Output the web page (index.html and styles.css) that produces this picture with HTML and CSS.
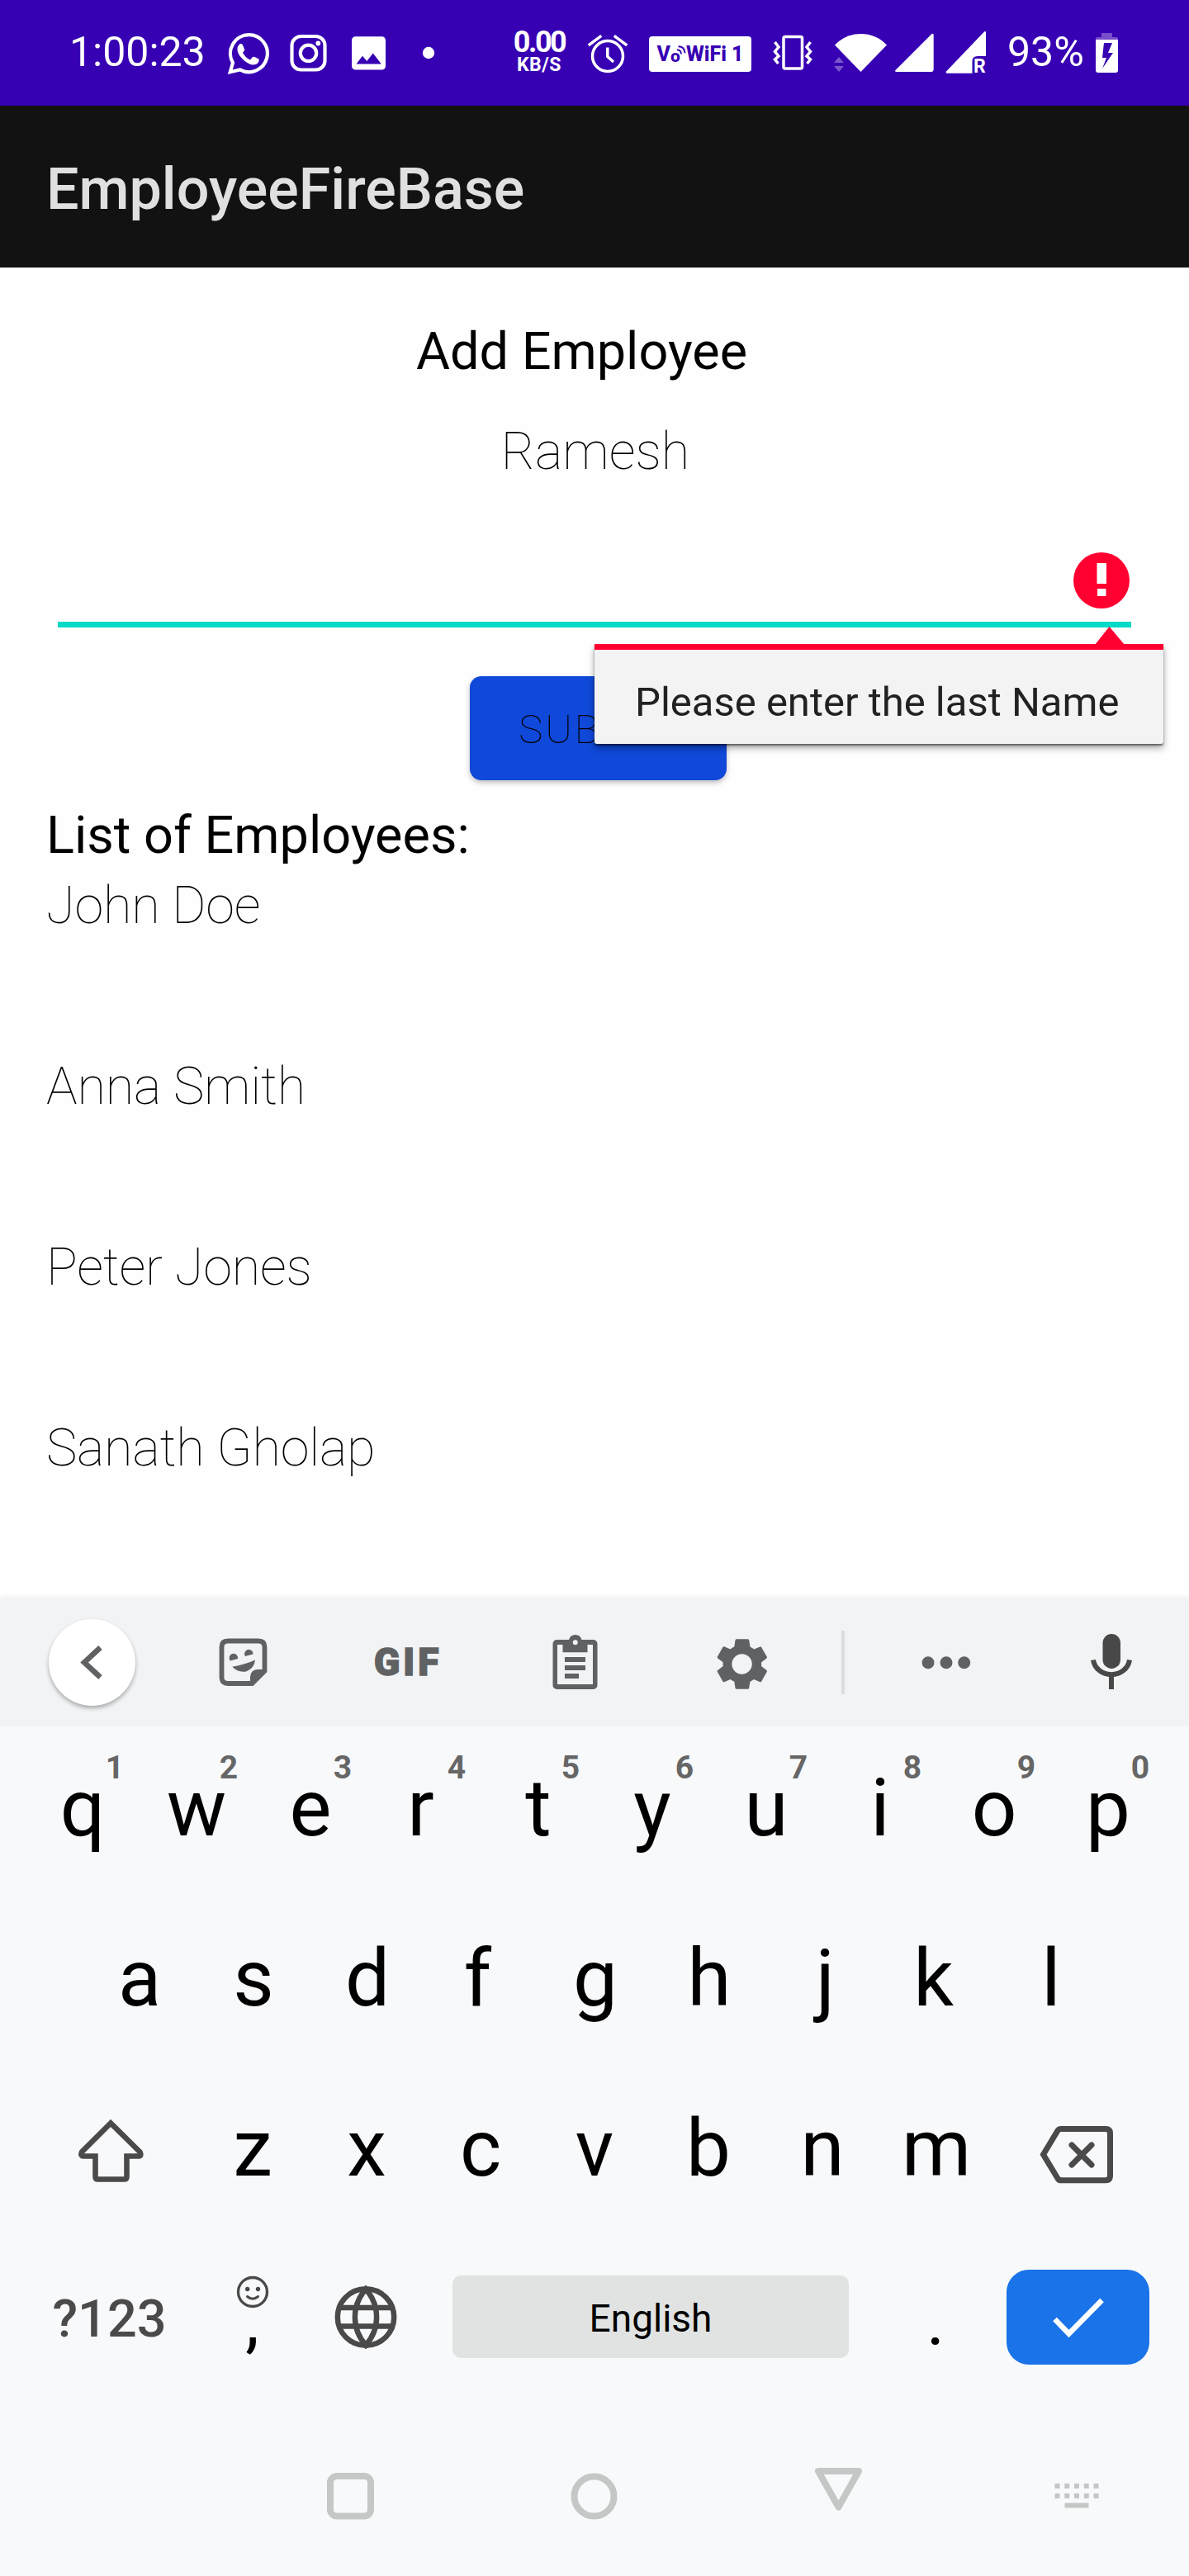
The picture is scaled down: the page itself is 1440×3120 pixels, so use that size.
FILE: index.html
```html
<!DOCTYPE html>
<html lang="en">
<head>
<meta charset="utf-8">
<title>EmployeeFireBase</title>
<link rel="stylesheet" href="styles.css">
</head>
<body>
<div class="status">
  <span class="clock">1:00:23</span>
  <svg class="whatsapp" width="52" height="128" viewBox="275 0 52 128"><path d="M301 42.200A22.500 22.500 0 1 1 290.500 84.400L278.800 87.200L282 76A22.500 22.500 0 0 1 301 42.200Z" fill="none" stroke="#fff" stroke-width="4.200"/><path d="M289 54.500c1.500-2 4-2.200 5 0l2 5c.5 1.500-.2 2.500-2 4.300c2 4 5 7 9 8.700l2.500-3c.8-1 2-1 3-.5l4.500 2.300c1.500 1 .5 4.200-1.500 5.800c-4 3-10 1-15-3c-6-5-12-13-7.500-19.600Z" fill="#fff"/></svg>
  <svg class="insta" width="48" height="128" viewBox="350 0 48 128"><rect x="353.500" y="44" width="40" height="40.500" rx="11" fill="none" stroke="#fff" stroke-width="4.200"/><circle cx="373.500" cy="64.300" r="9.700" fill="none" stroke="#fff" stroke-width="4.200"/><circle cx="385.300" cy="52.500" r="2.900" fill="#fff"/></svg>
  <svg class="photo" width="42" height="128" viewBox="426 0 42 128"><path fill="#fff" fill-rule="evenodd" d="M430.500 44.200h32a4.500 4.500 0 0 1 4.500 4.500v31.300a4.500 4.500 0 0 1-4.500 4.500h-32a4.500 4.500 0 0 1-4.500-4.500v-31.300a4.500 4.500 0 0 1 4.500-4.500ZM431.500 77.500h30.300L451.800 64.500L444.300 74L439 67.800Z"/></svg>
  <svg class="dot" width="16" height="128" viewBox="511 0 16 128"><circle cx="519" cy="64" r="7.200" fill="#fff"/></svg>
  <span class="speed"><b class="rate">0.00</b><b class="unit">KB/S</b></span>
  <svg class="alarm" width="50" height="128" viewBox="711 0 50 128"><g fill="none" stroke="#fff" stroke-width="3.500"><circle cx="736" cy="68" r="18.500"/><path d="M735.800 57.500v11l7.200 6.500M712.800 54.800l15.500-11.500M743.800 43.300l15.500 11.500"/></g></svg>
  <span class="vowifi"><span>V</span><span class="vo">o<svg class="waves" width="12" height="12" viewBox="0 0 12 12"><path d="M1 5.500q4.500-.5 5 5M2.500 1.200q7.500 0 8 8" fill="none" stroke="#3700b3" stroke-width="2"/></svg></span><span>WiFi 1</span></span>
  <svg class="vibrate" width="48" height="128" viewBox="936 0 48 128"><g fill="none" stroke="#fff" stroke-width="3.500"><rect x="949" y="44.500" width="22.500" height="38.500" rx="2"/><path d="M938.500 51l4.500 6l-4.500 5.500l4.500 5.500l-4.500 4l4 5M981.500 51l-4.500 6l4.500 5.500l-4.500 5.500l4.500 4l-4 5"/></g></svg>
  <svg class="wifi" width="66" height="128" viewBox="1009 0 66 128"><path d="M1011 54.500Q1024 41 1042.500 41T1074 54.500L1042.500 87Z" fill="#fff"/><path d="M1010 76l6-7l6 7ZM1010 80h12l-6 7Z" fill="#7a55cb"/></svg>
  <svg class="signal" width="48" height="128" viewBox="1084 0 48 128"><path d="M1084.500 85L1128 41.500Q1130.500 40 1130.700 42V84Q1130.500 87 1128 87H1085Q1083.500 86.500 1084.500 85Z" fill="#fff"/></svg>
  <span class="roaming"><svg width="50" height="128" viewBox="1145 0 50 128"><path d="M1146 86.500L1191 39.500Q1194 37 1194 39V68H1184Q1177.500 68 1177.500 74V88.800H1147Q1145 88.500 1146 86.500Z" fill="#fff"/></svg><b>R</b></span>
  <span class="percent">93%</span>
  <svg class="battery" width="28" height="128" viewBox="1327 0 28 128"><path d="M1334 40h13v5h5q2 0 2 3h-27q0-3 2-3h5Z" fill="#7a4dca"/><path d="M1327 48h27v37q0 3-3 3h-21q-3 0-3-3ZM1337 52l-2 18h5l-5 13l13-19h-6l5-12Z" fill="#fff" fill-rule="evenodd"/></svg>
</div>
<header class="appbar">EmployeeFireBase</header>
<main class="content">
  <h2 class="heading">Add Employee</h2>
  <div class="first-name">Ramesh</div>
  <div class="last-name">
    <svg class="error-icon" width="68" height="68" viewBox="0 0 68 68"><circle cx="34" cy="34" r="34" fill="#ff0030"/><path d="M28.500 13h11.500v25h-11.500ZM29 44h10.500v9h-10.500Z" fill="#fff"/></svg>
    <div class="popup">Please enter the last Name<svg class="arrow" width="36" height="22" viewBox="0 0 36 22"><path d="M0 22L17.500 0L36 22Z" fill="#ff0030"/></svg></div>
  </div>
  <button class="submit">SUBMIT</button>
  <h2 class="list-title">List of Employees:</h2>
  <ul class="employees"><li>John Doe</li><li>Anna Smith</li><li>Peter Jones</li><li>Sanath Gholap</li></ul>
</main>
<section class="keyboard">
  <div class="tools">
    <span class="back"><svg width="105" height="105" viewBox="59 1961 105 105"><path d="M121.500 1995.500L102 2013.500L121.500 2031.500" fill="none" stroke="#606163" stroke-width="6.500"/></svg></span>
    <svg class="sticker" width="60" height="155" viewBox="265 1936 60 155"><path d="M320.500 2025V1995Q320.500 1987.500 313 1987.500H276Q268.500 1987.500 268.500 1995V2031.500Q268.500 2039 276 2039H306" fill="none" stroke="#606163" stroke-width="5.800"/><path d="M323.500 2025L306.500 2042H303V2031Q303.500 2022 313 2022H320ZM281.300 2018.800Q297 2016 309 2010.500Q308 2021 298 2024.500Q288 2026 281.300 2018.800ZM279 2011.500A5.200 5.200 0 1 1 288 2009ZM297 2006A5.200 5.200 0 1 1 306.500 2003.500Z" fill="#606163"/></svg>
    <span class="gif">GIF</span>
    <svg class="clip" width="56" height="155" viewBox="669 1936 56 155"><g fill="#606163"><path fill-rule="evenodd" d="M674 1986h15a8 8 0 0 1 15.500 0h14a5 5 0 0 1 5 5v50a5 5 0 0 1-5 5h-44a5 5 0 0 1-5-5v-50a5 5 0 0 1 5-5ZM675 1992v48h43v-48h-6.500v9.300h-30v-9.300ZM696.700 1986.200a3 3 0 1 0 .1 6a3 3 0 0 0-.1-6Z"/><path d="M684 2007h25v6h-25ZM684 2017h25v6h-25ZM684 2027h17v6h-17Z"/></g></svg>
    <svg class="gear" width="62" height="155" viewBox="868 1936 62 155"><path fill="#606163" fill-rule="evenodd" d="M892 1985.300h13.500q1.400 0 1.700 1.400l1.400 8q2.700 1.300 4.500 2.800l7.500-3.100q1-.3 1.600.8l6.500 11.300q.6 1.200-.3 2l-6.400 5q.3 2.600 0 4.600l6.400 5q.9.800.3 2l-6.500 11.300q-.6 1.100-1.700.8l-7.500-3.100q-2.300 1.800-4.600 2.800l-1.200 7.700q-.3 1.200-1.700 1.200h-13.300q-1.400 0-1.700-1.400l-1.200-7.600q-2.500-1.200-4.700-2.700l-7.500 3.100q-1 .3-1.700-.8l-6.500-11.300q-.6-1.200.3-2l6.500-5q-.4-2.400 0-4.800l-6.500-4.900q-.9-.8-.3-2l6.500-11.300q.7-1.100 1.700-.8l7.500 3.100q2.300-1.700 4.700-2.800l1.200-8q.3-1.300 1.700-1.300ZM898.500 2003.300a12.200 12.200 0 1 0 .1 24.400a12.200 12.200 0 0 0-.1-24.400Z"/></svg>
    <span class="divider"></span>
    <svg class="more" width="60" height="155" viewBox="1116 1936 60 155"><g fill="#606163"><circle cx="1124" cy="2013.800" r="7.500"/><circle cx="1146" cy="2013.800" r="7.500"/><circle cx="1167.700" cy="2013.800" r="7.500"/></g></svg>
    <svg class="mic" width="52" height="155" viewBox="1320 1936 52 155"><rect x="1335.500" y="1979" width="21.500" height="42" rx="10.700" fill="#484848"/><path d="M1324 2010.500A22.200 20.500 0 0 0 1368 2010.500M1346 2031v15" fill="none" stroke="#484848" stroke-width="6"/></svg>
  </div>
  <div class="row top"><span>q<sup>1</sup></span><span>w<sup>2</sup></span><span>e<sup>3</sup></span><span class="left">r<sup>4</sup></span><span>t<sup>5</sup></span><span>y<sup>6</sup></span><span>u<sup>7</sup></span><span>i<sup>8</sup></span><span>o<sup>9</sup></span><span>p<sup>0</sup></span></div>
  <div class="row home"><span>a</span><span>s</span><span>d</span><span class="left">f</span><span>g</span><span>h</span><span class="right">j</span><span class="left">k</span><span>l</span></div>
  <div class="row lower">
    <svg class="shift" width="206" height="206" viewBox="31 2503 206 206"><path d="M134 2571.500L99 2606.500Q97 2611 101 2611.500H115.500V2636.500Q115.500 2639.500 118.500 2639.500H150.500Q153.500 2639.500 153.500 2636.500V2611.500H168Q172 2611 169.500 2606.500Z" fill="none" stroke="#4a4a4a" stroke-width="6.600"/></svg>
    <span>z</span><span>x</span><span>c</span><span>v</span><span>b</span><span>n</span><span>m</span>
    <svg class="delete" width="206" height="206" viewBox="1203 2503 206 206"><path d="M1263.500 2609.500L1281 2580.500Q1282.500 2578.500 1285 2578.500H1339Q1344.500 2578.500 1344.500 2583.500V2635.500Q1344.500 2640.800 1339 2640.800H1285Q1282.500 2640.800 1281 2638.500Z" fill="none" stroke="#4a4a4a" stroke-width="7"/><path d="M1298 2598l24 24M1322 2598l-24 24" stroke="#4a4a4a" stroke-width="7" stroke-linecap="round"/></svg>
  </div>
  <div class="row bottom">
    <span class="symbols">?123</span>
    <span class="comma"><svg width="40" height="40" viewBox="0 0 40 40"><circle cx="20" cy="20" r="17.500" fill="none" stroke="#4a4a4a" stroke-width="3.300"/><circle cx="13.700" cy="16.500" r="2.700" fill="#4a4a4a"/><circle cx="26.500" cy="16.500" r="2.700" fill="#4a4a4a"/><path d="M13.500 25.500Q20 31 26.500 25.500" fill="none" stroke="#4a4a4a" stroke-width="3" stroke-linecap="round"/></svg>,</span>
    <svg class="globe" width="138" height="206" viewBox="374 2709 138 206"><g fill="none" stroke="#4a4a4a" stroke-width="6.500"><circle cx="443" cy="2806.500" r="34.200"/><path d="M412 2795h62M412 2817.500h62M443 2772.500c-17.500 20-17.500 48 0 68c17.500-20 17.500-48 0-68Z"/></g></svg>
    <span class="space">English</span>
    <span class="period">.</span>
    <span class="enter"><svg width="173" height="115" viewBox="1219 2749 173 115"><path d="M1277.500 2809L1294.500 2826.500L1334.500 2786" fill="none" stroke="#fff" stroke-width="6.500"/></svg></span>
  </div>
  <div class="nav">
    <svg class="recent" width="58" height="206" viewBox="396 2914 58 206"><rect x="400" y="2998" width="49" height="48.500" rx="8" fill="none" stroke="#c5c7c6" stroke-width="8"/></svg>
    <svg class="home-btn" width="58" height="206" viewBox="691 2914 58 206"><circle cx="719.500" cy="3022.500" r="24" fill="none" stroke="#c5c7c6" stroke-width="8"/></svg>
    <svg class="hide" width="58" height="206" viewBox="987 2914 58 206"><path d="M991 2992H1040L1015.500 3035.500Z" fill="none" stroke="#c5c7c6" stroke-width="8" stroke-linejoin="round"/></svg>
    <svg class="switcher" width="56" height="206" viewBox="1276 2914 56 206"><path d="M1277.500 3010H1332M1277.500 3022H1332" stroke="#c5c7c6" stroke-width="6" stroke-dasharray="6 5.750"/><path d="M1289.500 3033.500h29" stroke="#c5c7c6" stroke-width="6"/></svg>
  </div>
</section>
</body>
</html>
```

FILE: styles.css
```css
* { box-sizing: border-box; }
body { margin: 0; width: 1440px; height: 3120px; overflow: hidden; background: #fefefe; color: #000; font-family: Roboto, "Liberation Sans", sans-serif; }
svg { display: block; flex: none; }
.status { display: flex; height: 128px; background: #3700b3; color: #fff; padding-left: 84px; }
.clock { width: 191px; font-size: 50px; line-height: 126px; white-space: nowrap; }
.insta { margin-left: 23px; }
.photo { margin-left: 28px; }
.dot { margin-left: 43px; }
.speed { display: flex; flex-direction: column; align-items: center; width: 70px; margin-left: 91px; padding-top: 33px; }
.rate { font-size: 36px; line-height: 36px; letter-spacing: -2.500px; }
.unit { font-size: 23px; line-height: 20px; letter-spacing: .5px; }
.alarm { margin-left: 23px; }
.vowifi { display: flex; justify-content: center; width: 124px; height: 43px; margin: 44px 0 0 25px; border-radius: 4px; background: #fff; color: #3700b3; font-size: 25px; font-weight: 800; line-height: 44px; white-space: nowrap; }
.vo { position: relative; width: 19px; font-size: 21px; line-height: 49px; }
.waves { position: absolute; left: 7px; top: 11px; }
.vibrate { margin-left: 26px; }
.wifi { margin-left: 25px; }
.signal { margin-left: 9px; }
.roaming { position: relative; margin-left: 13px; }
.roaming b { position: absolute; left: 34px; top: 70px; font-size: 23px; line-height: 22px; }
.percent { width: 107px; margin-left: 25px; font-size: 50px; line-height: 126px; }
.appbar { height: 196px; padding-left: 56px; background: #121212; color: #e0e0e0; font-size: 70px; font-weight: 500; line-height: 202px; }
.content { display: flex; flex-direction: column; height: 1612px; padding-top: 64px; }
h2 { margin: 0; font-size: 63px; font-weight: 400; line-height: 75px; }
.heading { margin-right: 31px; text-align: center; }
.first-name { margin: 46px 0 0 2px; font-size: 63px; font-weight: 100; line-height: 75px; text-align: center; }
.last-name { position: relative; height: 176px; margin: 0 70px; border-bottom: 7px solid #03dac5; }
.error-icon { position: absolute; right: 2px; top: 85px; }
.popup { position: absolute; z-index: 2; left: 650px; top: 196px; width: 689px; height: 121px; border-top: 7px solid #ff0030; border-radius: 0 0 3px 3px; background: #f3f3f3; color: #212121; font-size: 49px; line-height: 127px; padding-left: 49px; white-space: nowrap; box-shadow: 0 2px 2px rgba(0,0,0,.45), 0 5px 9px rgba(0,0,0,.35); }
.arrow { position: absolute; left: 606px; top: -28px; }
.submit { align-self: center; width: 311px; height: 126px; margin: 59px 0 0 9px; padding: 2px 0 0; border: 0; border-radius: 14px; background: #1048d9; color: #000; font: 100 49px Roboto, sans-serif; letter-spacing: 3px; box-shadow: 0 3px 6px rgba(0,0,0,.25); }
.list-title { margin: 29px 0 0 56px; }
.employees { margin: 10px 0 0 56px; padding: 0; list-style: none; font-size: 63px; font-weight: 100; line-height: 75px; letter-spacing: -.2px; }
.employees li { height: 219px; }
.keyboard { position: relative; height: 1184px; background: #f8f9fb; box-shadow: 0 -2px 5px rgba(0,0,0,.06); }
.tools { display: flex; height: 155px; background: #f1f3f4; padding-left: 59px; }
.back { height: 105px; margin: 25px 101px 0 0; border-radius: 50%; background: #fff; box-shadow: 0 3px 5px rgba(0,0,0,.3); }
.gif { width: 86px; margin-left: 128px; color: #606163; font-size: 46px; font-weight: 900; line-height: 155px; letter-spacing: 4px; -webkit-text-stroke: 1.500px #606163; }
.clip { margin-left: 130px; }
.gear { margin-left: 143px; }
.divider { width: 4px; height: 77px; margin: 39px 93px 0 89px; background: #dadce0; }
.mic { margin-left: 144px; }
.row { display: flex; height: 206px; padding-left: 31px; font-size: 96px; line-height: 198px; }
.row > span { position: relative; width: 138px; text-align: center; }
.row > .left { padding-right: 9px; }
.row > .right { padding-left: 5px; }
.row sup { position: absolute; left: 88px; width: 40px; top: 27px; color: #666; font-size: 39px; font-weight: 700; line-height: 46px; text-align: center; }
.home { padding-left: 100px; }
.row .symbols { width: 206px; padding-right: 3px; color: #4a4a4a; font-size: 63px; font-weight: 500; line-height: 200px; }
.row .comma { width: 137px; font-size: 84px; line-height: 206px; }
.comma svg { position: absolute; left: 49px; top: 47px; }
.row .space { width: 480px; height: 100px; margin: 47px 36px 0; border-radius: 10px; background: #e1e3e2; font-size: 46px; line-height: 104px; }
.row .period { font-size: 84px; line-height: 205px; }
.row .enter { width: 173px; height: 115px; margin: 40px 0 0 17px; border-radius: 27px; background: #1a73e8; }
.nav { display: flex; height: 205px; padding-left: 396px; }
.home-btn { margin-left: 237px; }
.hide { margin-left: 238px; }
.switcher { margin-left: 231px; }
```
